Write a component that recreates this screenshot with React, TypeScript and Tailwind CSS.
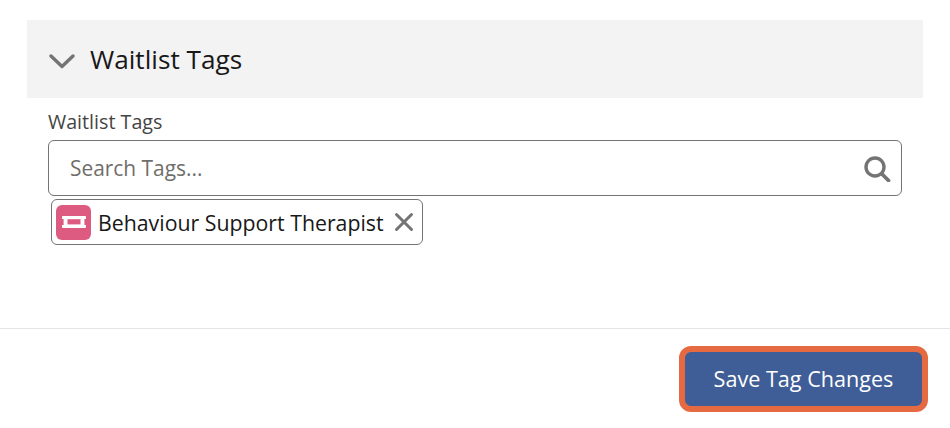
import React from "react";

export default function App() {
  return (
    <div className="w-[950px] h-[428px] bg-white overflow-hidden flex flex-col font-['Open_Sans','Noto_Sans',sans-serif] text-[#181818]">
      <div className="flex-1 pt-5 pl-[27px] pr-[27px]">
        <div className="h-[78px] bg-[#f3f3f3] flex items-center pl-[22px] gap-[15px]">
          <svg width="26" height="16" viewBox="0 0 26 16" fill="none" className="mt-1">
            <path d="M2 3l11 10.5L24 3" stroke="#747474" strokeWidth="3.4" strokeLinecap="round" strokeLinejoin="round" />
          </svg>
          <span className="text-[26.2px] leading-none">Waitlist Tags</span>
        </div>
        <div className="px-[21px]">
          <div className="mt-[12px] text-[19.7px] leading-[24px] text-[#444444]">Waitlist Tags</div>
          <div className="mt-[6px] h-[56px] border border-[#747474] rounded-[6px] flex items-center pl-[21px] pr-[10px]">
            <span className="flex-1 text-[20.9px] mt-px text-[#706e6b]">Search Tags...</span>
            <svg width="28" height="28" viewBox="0 0 28 28" fill="none">
              <circle cx="12" cy="13" r="9" stroke="#747474" strokeWidth="3.4" />
              <path d="M19 20l6.5 6.5" stroke="#747474" strokeWidth="3.8" strokeLinecap="round" />
            </svg>
          </div>
          <div className="ml-[3px] mt-[3px] w-[372px] h-[46px] border border-[#747474] rounded-[6px] flex items-center pl-[4px]">
            <span className="w-[35px] h-[35px] rounded-[6px] bg-[#dd5a80] flex items-center justify-center">
              <svg width="24" height="14" viewBox="0 0 24 14" fill="none">
                <path d="M1 1h22a1 1 0 0 1 1 1v2h-1.6v6H24v2a1 1 0 0 1-1 1H1a1 1 0 0 1-1-1v-2h1.6V4H0V2a1 1 0 0 1 1-1z" fill="white" />
                <rect x="5.5" y="4.2" width="13" height="5.2" fill="#dd5a80" />
              </svg>
            </span>
            <span className="ml-[7px] mt-[2px] text-[21.3px] whitespace-nowrap">Behaviour Support Therapist</span>
            <svg width="20" height="20" viewBox="0 0 20 20" fill="none" className="ml-[10px]">
              <path d="M2.5 2.5l15 15M17.5 2.5l-15 15" stroke="#747474" strokeWidth="3" strokeLinecap="round" />
            </svg>
          </div>
        </div>
      </div>
      <div className="h-[100px] border-t border-[#e5e5e5] flex items-start justify-end pt-[17px] pr-[22px]">
        <button className="w-[249px] h-[66px] rounded-[12px] bg-[#3f5d96] border-[6px] border-[#e66a41] text-white text-[21.6px]">
          Save Tag Changes
        </button>
      </div>
    </div>
  );
}
